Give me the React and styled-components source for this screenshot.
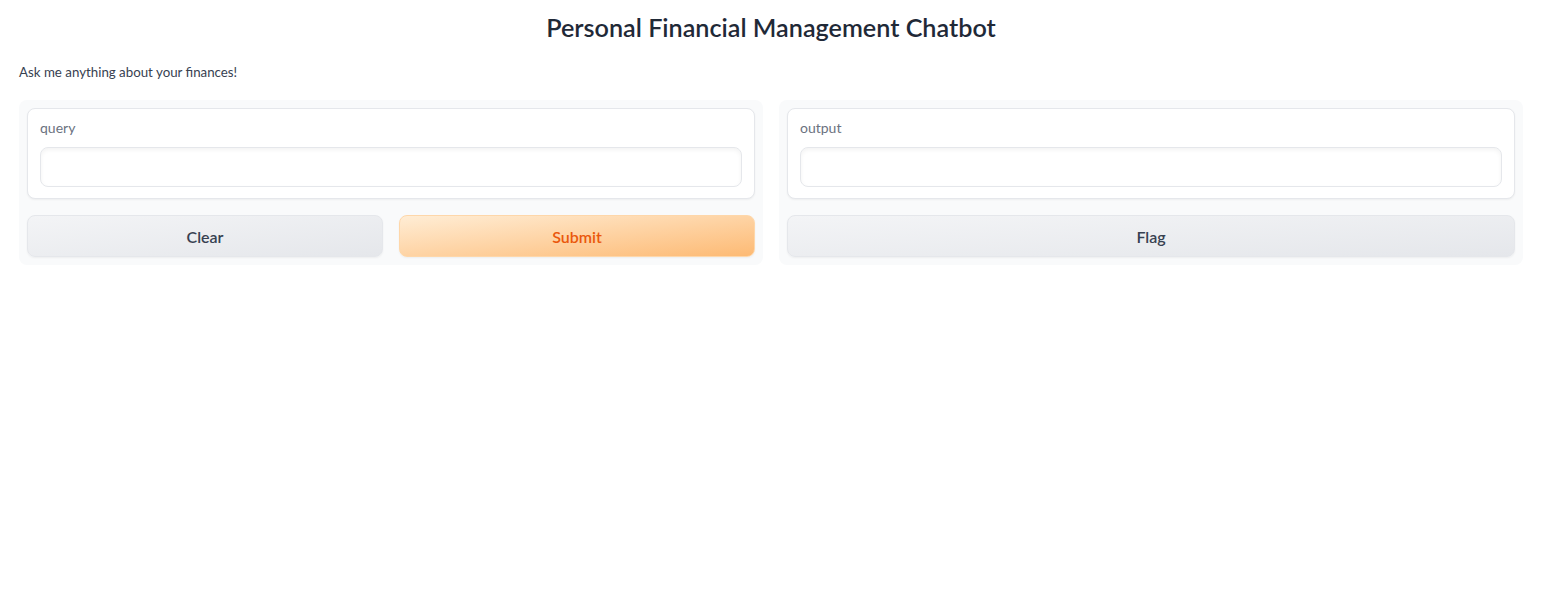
import React from 'react';
import styled, { createGlobalStyle } from 'styled-components';

const GlobalStyle = createGlobalStyle`
  body {
    margin: 0;
    background: #ffffff;
    font-family: Lato, "Noto Sans", sans-serif;
    color: #1f2937;
  }
`;

const Page = styled.div`
  padding: 12px 19px;
`;

const Title = styled.h1`
  margin: 0 0 20px;
  text-align: center;
  font-size: 25.2px;
  font-weight: 600;
  line-height: 30px;
  color: #1f2937;
`;

const Description = styled.p`
  margin: 0 0 18px;
  font-size: 13.3px;
  line-height: 20px;
  color: #374151;
`;

const Columns = styled.div`
  display: flex;
  gap: 16px;
`;

const Panel = styled.div`
  flex: 1;
  display: flex;
  flex-direction: column;
  gap: 16px;
  padding: 8px;
  background: #f9fafb;
  border-radius: 8px;
`;

const Block = styled.div`
  background: #ffffff;
  border: 1px solid #e5e7eb;
  border-radius: 8px;
  box-shadow: 0 1px 2px rgba(0, 0, 0, 0.05);
  padding: 10px 12px 11px;
`;

const Label = styled.div`
  font-size: 14px;
  line-height: 18px;
  color: #6b7280;
  margin-bottom: 10px;
`;

const Field = styled.div`
  height: 40px;
  box-sizing: border-box;
  border: 1px solid #e5e7eb;
  border-radius: 8px;
  box-shadow: inset 0 2px 4px rgba(0, 0, 0, 0.05);
  background: #ffffff;
`;

const Buttons = styled.div`
  display: flex;
  gap: 16px;
`;

const Button = styled.button`
  flex: 1;
  height: 42px;
  border-radius: 8px;
  font-family: inherit;
  font-size: 16px;
  font-weight: 600;
  cursor: pointer;
  box-shadow: 0 1px 2px rgba(0, 0, 0, 0.05);
  border: 1px solid ${p => (p.primary ? '#fed7aa' : '#e5e7eb')};
  color: ${p => (p.primary ? '#ea580c' : '#374151')};
  background: ${p =>
    p.primary
      ? 'linear-gradient(to bottom right, #ffedd5, #fdba74)'
      : 'linear-gradient(to bottom right, #f3f4f6, #e5e7eb)'};
`;

function Box({ label }) {
  return (
    <Block>
      <Label>{label}</Label>
      <Field />
    </Block>
  );
}

export default function App() {
  return (
    <Page>
      <GlobalStyle />
      <Title>Personal Financial Management Chatbot</Title>
      <Description>Ask me anything about your finances!</Description>
      <Columns>
        <Panel>
          <Box label="query" />
          <Buttons>
            <Button>Clear</Button>
            <Button primary>Submit</Button>
          </Buttons>
        </Panel>
        <Panel>
          <Box label="output" />
          <Buttons>
            <Button>Flag</Button>
          </Buttons>
        </Panel>
      </Columns>
    </Page>
  );
}
